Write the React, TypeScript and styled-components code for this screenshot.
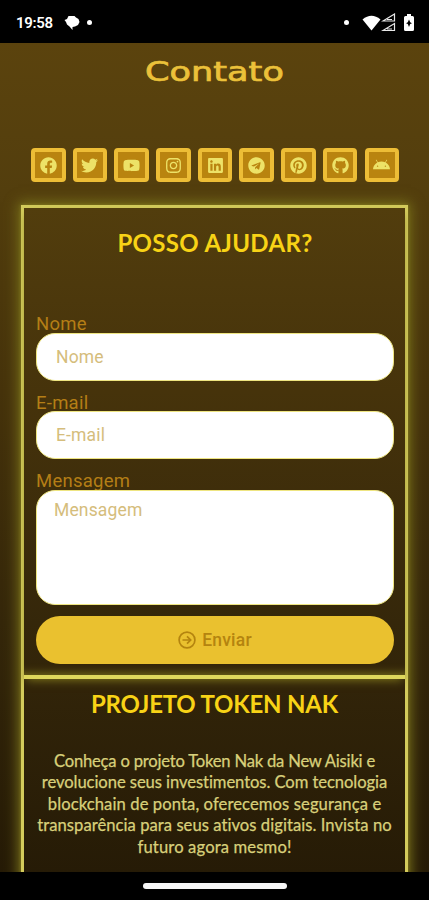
import React from "react";
import styled, { createGlobalStyle } from "styled-components";
import {
  FaFacebook,
  FaTwitter,
  FaYoutube,
  FaInstagram,
  FaLinkedin,
  FaTelegram,
  FaPinterest,
  FaGithub,
  FaAndroid,
} from "react-icons/fa";

const GlobalStyle = createGlobalStyle`
  * { box-sizing: border-box; }
  body { margin: 0; background: #000; }
`;

const Screen = styled.div`
  width: 429px;
  height: 900px;
  display: flex;
  flex-direction: column;
  overflow: hidden;
  background: #000;
  font-family: Roboto, sans-serif;
`;

const StatusBar = styled.header`
  flex: 0 0 43px;
  display: flex;
  align-items: center;
  justify-content: space-between;
  padding: 2px 15px 0 16px;
  color: #fff;
`;

const StatusGroup = styled.div`
  display: flex;
  align-items: center;
`;

const Clock = styled.span`
  font-size: 15px;
  font-weight: 600;
  letter-spacing: -0.3px;
  margin-right: 11px;
`;

const Dot = styled.i<{ $before?: number; $after?: number }>`
  width: 5px;
  height: 5px;
  border-radius: 50%;
  background: #fff;
  margin-left: ${(p) => p.$before ?? 0}px;
  margin-right: ${(p) => p.$after ?? 0}px;
`;

const BatterySlot = styled.span`
  display: flex;
  margin-left: 8px;
`;

const Page = styled.main`
  flex: 0 0 829px;
  overflow: hidden;
  display: flex;
  flex-direction: column;
  background: linear-gradient(#5b430d 0%, #533e0d 18%, #46330b 42%, #35270a 70%, #261b06 100%);
`;

const Title = styled.h1`
  margin: 10px 0 0;
  height: 40px;
  line-height: 38px;
  text-align: center;
  font-family: "DejaVu Sans", sans-serif;
  font-size: 27px;
  font-weight: 400;
  color: #ebc13a;
  -webkit-text-stroke: 0.7px #ebc13a;
  transform: scaleX(1.3);
`;

const SocialRow = styled.nav`
  display: flex;
  justify-content: space-between;
  margin: 55px 30px 0 31px;
  padding-top: 2px;
`;

const SocialButton = styled.a`
  width: 34.5px;
  height: 34px;
  display: flex;
  align-items: center;
  justify-content: center;
  border: 4px solid #edbd36;
  border-radius: 4px;
  background: #b9840f;
  color: #ede267;
  font-size: 17px;
`;

const Panels = styled.div`
  flex: none;
  width: 387px;
  height: 760px;
  margin: 23px 0 0 21px;
  border: 3px solid #d3cb5c;
  box-shadow: 0 0 12px 3px #776f1b, 0 0 3px #958c2b;
`;

const ContactPanel = styled.section`
  height: 471px;
  padding: 0 11px 0 12px;
  border-bottom: 4px solid #ded75c;
  box-shadow: 0 4px 9px -3px #81781c, inset 0 -10px 9px -8px #746b1b;
`;

const Heading = styled.h2<{ $spacing: number; $top: number }>`
  margin: 0;
  padding-top: ${(p) => p.$top}px;
  line-height: 34px;
  text-align: center;
  white-space: nowrap;
  font-family: Lato, sans-serif;
  font-size: 24px;
  font-weight: 700;
  letter-spacing: ${(p) => p.$spacing}px;
  color: #f8d316;
`;

const Form = styled.form`
  display: flex;
  flex-direction: column;
  padding-top: 53px;
`;

const Label = styled.label`
  height: 19.5px;
  line-height: 23px;
  font-size: 18.5px;
  color: #b47e16;
  letter-spacing: 0.25px;
`;

const Input = styled.input`
  width: 100%;
  height: 48px;
  margin-bottom: 11px;
  padding: 0 19px;
  border: 1px solid #eee581;
  border-radius: 19px;
  background: #fff;
  font: 17.5px Roboto, sans-serif;
  letter-spacing: 0.15px;
  &::placeholder { color: #d5bd7c; opacity: 1; }
`;

const TextArea = styled.textarea`
  width: 100%;
  height: 115.5px;
  padding: 8px 17px;
  border: 1px solid #eee581;
  border-radius: 19px;
  background: #fff;
  resize: none;
  font: 17.5px/22px Roboto, sans-serif;
  letter-spacing: 0.15px;
  &::placeholder { color: #d5bd7c; opacity: 1; }
`;

const Submit = styled.button`
  height: 48px;
  margin-top: 11px;
  display: flex;
  align-items: center;
  justify-content: center;
  gap: 6px;
  border: 0;
  border-radius: 24px;
  background: #eac12f;
  color: #b4840f;
  font: 500 17.5px Roboto, sans-serif;
  letter-spacing: 0.2px;
`;

const ProjectPanel = styled.section`
  padding-top: 1px;
`;

const Description = styled.p`
  margin: 30px 0 0;
  text-align: center;
  white-space: nowrap;
  font-family: Lato, sans-serif;
  font-size: 16.6px;
  font-weight: 400;
  line-height: 21.4px;
  color: #d8d07a;
  -webkit-text-stroke: 0.25px #d8d07a;
`;

const Line = styled.span<{ $spacing: number }>`
  display: block;
  letter-spacing: ${(p) => p.$spacing}px;
`;

const NavigationBar = styled.footer`
  flex: 0 0 28px;
  display: flex;
  justify-content: center;
  align-items: center;
`;

const Handle = styled.div`
  width: 144px;
  height: 6px;
  border-radius: 3px;
  background: #f7f7f7;
`;

const socials = [
  { name: "Facebook", Icon: FaFacebook },
  { name: "Twitter", Icon: FaTwitter },
  { name: "YouTube", Icon: FaYoutube },
  { name: "Instagram", Icon: FaInstagram },
  { name: "LinkedIn", Icon: FaLinkedin },
  { name: "Telegram", Icon: FaTelegram },
  { name: "Pinterest", Icon: FaPinterest },
  { name: "GitHub", Icon: FaGithub },
  { name: "Android", Icon: FaAndroid },
];

const description = [
  { text: "Conheça o projeto Token Nak da New Aisiki e", spacing: -0.2 },
  { text: "revolucione seus investimentos. Com tecnologia", spacing: -0.07 },
  { text: "blockchain de ponta, oferecemos segurança e", spacing: 0.1 },
  { text: "transparência para seus ativos digitais. Invista no", spacing: 0.05 },
  { text: "futuro agora mesmo!", spacing: 0.15 },
];

const ChatIcon = () => (
  <svg width="16" height="16" viewBox="0 0 16 16" fill="#fff">
    <path d="M4.500 1h6l1.500 1.500 2.500 1.500 1 3-1.500 3-3 1.500-2.500.5V15l-3-3.500-2.500-2L2 7 .5 5l2.500-1z" />
  </svg>
);

const WifiIcon = () => (
  <svg width="19" height="16" viewBox="0 0 19 16" fill="#fff">
    <path d="M.5 4.500Q9.500-3 18.500 4.500L9.500 15.500z" />
  </svg>
);

const SignalIcon = () => (
  <svg width="15" height="19" viewBox="0 0 15 19" fill="none" stroke="#e8e8e8" strokeWidth="1.2">
    <path d="M2 8 13.500 1v7zM6 6.500h5M2 17.500l11.500-7v7zM6 16h5" />
  </svg>
);

const BatteryIcon = () => (
  <svg width="10" height="17" viewBox="0 0 10 17">
    <path d="M3 0h4v2h1.500Q10 2 10 3.500v12Q10 17 8.500 17h-7Q0 17 0 15.500v-12Q0 2 1.500 2H3z" fill="#fff" />
    <path d="M5 5.500 6.200 8.300 8 9.200 6.200 10.100 5 13 3.800 10.100 2 9.200 3.800 8.300z" fill="#000" />
  </svg>
);

const ArrowCircle = () => (
  <svg width="18" height="18" viewBox="0 0 18 18" fill="none" stroke="currentColor" strokeWidth="1.7">
    <circle cx="9" cy="9" r="7.900" />
    <path d="M4.500 9h8M9 5.300 12.700 9 9 12.700" />
  </svg>
);

export default function App() {
  return (
    <Screen>
      <GlobalStyle />
      <StatusBar>
        <StatusGroup>
          <Clock>19:58</Clock>
          <ChatIcon />
          <Dot $before={7} />
        </StatusGroup>
        <StatusGroup>
          <Dot $after={13} />
          <WifiIcon />
          <SignalIcon />
          <BatterySlot>
            <BatteryIcon />
          </BatterySlot>
        </StatusGroup>
      </StatusBar>
      <Page>
        <Title>Contato</Title>
        <SocialRow>
          {socials.map(({ name, Icon }) => (
            <SocialButton key={name} aria-label={name}>
              <Icon />
            </SocialButton>
          ))}
        </SocialRow>
        <Panels>
          <ContactPanel>
            <Heading $spacing={0.35} $top={18}>POSSO AJUDAR?</Heading>
            <Form>
              <Label htmlFor="name">Nome</Label>
              <Input id="name" placeholder="Nome" />
              <Label htmlFor="email">E-mail</Label>
              <Input id="email" placeholder="E-mail" />
              <Label htmlFor="message">Mensagem</Label>
              <TextArea id="message" placeholder="Mensagem" />
              <Submit type="button">
                <ArrowCircle />
                Enviar
              </Submit>
            </Form>
          </ContactPanel>
          <ProjectPanel>
            <Heading $spacing={-0.2} $top={7}>PROJETO TOKEN NAK</Heading>
            <Description>
              {description.map(({ text, spacing }) => (
                <Line key={text} $spacing={spacing}>{text}</Line>
              ))}
            </Description>
          </ProjectPanel>
        </Panels>
      </Page>
      <NavigationBar>
        <Handle />
      </NavigationBar>
    </Screen>
  );
}
